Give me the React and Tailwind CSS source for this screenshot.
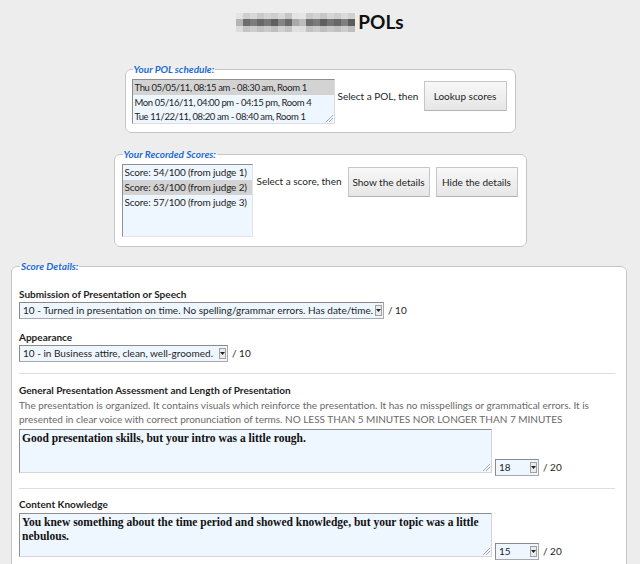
import React from 'react';

// pixelated (blurred-out) name in the title
const mosaicRows = [
  ['bg-[#e4e4e4]', 'bg-[#cfcfcf]', 'bg-[#d8d8d8]', 'bg-[#c9c9c9]', 'bg-[#d4d4d4]', 'bg-[#cdcdcd]', 'bg-[#d9d9d9]', 'bg-[#c6c6c6]', 'bg-[#e3e3e3]', 'bg-[#e6e6e6]', 'bg-[#cbcbcb]', 'bg-[#d3d3d3]', 'bg-[#c7c7c7]', 'bg-[#d6d6d6]', 'bg-[#cecece]', 'bg-[#dadada]', 'bg-[#d0d0d0]'],
  ['bg-[#b4b4b4]', 'bg-[#6d6d6d]', 'bg-[#7d7d7d]', 'bg-[#686868]', 'bg-[#777777]', 'bg-[#606060]', 'bg-[#858585]', 'bg-[#6a6a6a]', 'bg-[#a9a9a9]', 'bg-[#bcbcbc]', 'bg-[#6e6e6e]', 'bg-[#7a7a7a]', 'bg-[#5f5f5f]', 'bg-[#747474]', 'bg-[#676767]', 'bg-[#7f7f7f]', 'bg-[#5c5c5c]'],
  ['bg-[#dcdcdc]', 'bg-[#c4c4c4]', 'bg-[#cdcdcd]', 'bg-[#c1c1c1]', 'bg-[#cacaca]', 'bg-[#bfbfbf]', 'bg-[#d0d0d0]', 'bg-[#c3c3c3]', 'bg-[#e0e0e0]', 'bg-[#dedede]', 'bg-[#c2c2c2]', 'bg-[#cbcbcb]', 'bg-[#bebebe]', 'bg-[#c8c8c8]', 'bg-[#c0c0c0]', 'bg-[#cccccc]', 'bg-[#bdbdbd]'],
];

const rowHeights = ['h-[6px]', 'h-[7px]', 'h-[6px]'];

function Mosaic() {
  return (
    <div className="flex w-[119px] flex-col">
      {mosaicRows.map((row, i) => (
        <div key={i} className={`flex ${rowHeights[i]}`}>
          {row.map((c, j) => (
            <div key={j} className={`w-[7px] ${c}`} />
          ))}
        </div>
      ))}
    </div>
  );
}

function Grip() {
  return (
    <svg width="7" height="7" viewBox="0 0 7 7" className="absolute bottom-[1px] right-[1px]">
      <path d="M7 0L0 7M7 3L3 7" stroke="#aaaaaa" strokeWidth="1" />
    </svg>
  );
}

function Legend({ children }) {
  return (
    <legend className="ml-[1px] px-[1px] text-[10px] leading-[12px] font-bold italic text-[#1c68d4]">
      {children}
    </legend>
  );
}

function Button({ children, className = '' }) {
  return (
    <button
      className={`h-[30px] border border-[#c6c6c6] border-b-[#b2b2b2] bg-linear-to-b from-[#f8f8f8] to-[#e6e6e6] text-[10px] text-[#1e1e1e] ${className}`}
    >
      {children}
    </button>
  );
}

function Dropdown({ children, className = '' }) {
  return (
    <div
      className={`flex h-[17px] items-center justify-between border border-[#a8a8a8] border-t-[#8a8a8a] border-l-[#8a8a8a] bg-[#eef6ff] pl-[3px] pr-[1px] ${className}`}
    >
      <span className="overflow-hidden whitespace-nowrap leading-[15px]">{children}</span>
      <span className="ml-[2px] flex h-[11px] w-[7px] shrink-0 items-center justify-center border border-[#a0a0a0] bg-[#ebebeb]">
        <svg width="5" height="3" viewBox="0 0 5 3">
          <path d="M0 0h5L2.5 3z" fill="#222" />
        </svg>
      </span>
    </div>
  );
}

function Comment({ children, score }) {
  return (
    <div className="flex items-start">
      <div className="relative h-[44px] w-[473px] border border-[#d6d6d6] border-t-[#8e8e8e] border-l-[#8e8e8e] bg-[#eef6ff] px-[2px] pt-[1px] font-['Liberation_Serif',serif] text-[11.5px] leading-[14px] font-bold text-[#111]">
        {children}
        <Grip />
      </div>
      <Dropdown className="mt-[30px] ml-[3px] w-[44px]">{score}</Dropdown>
      <span className="mt-[30px] ml-[4px] leading-[17px]">/ 20</span>
    </div>
  );
}

export default function App() {
  return (
    <div className="h-[564px] overflow-hidden bg-[#ededed] pt-[10px] font-['Lato',sans-serif] text-[10px] text-[#1e1e1e]">
      <h1 className="flex h-[24px] items-center justify-center">
        <Mosaic />
        <span className="ml-[3px] text-[19px] leading-[24px] font-bold text-[#111]">POLs</span>
      </h1>

      <fieldset className="mx-auto mt-[29px] w-[391px] rounded-[6px] border border-[#c6c6c6] bg-white px-[6px] pb-[8px]">
        <Legend>Your POL schedule:</Legend>
        <div className="mt-[4px] flex items-start">
          <div className="relative h-[45px] w-[203px] shrink-0 overflow-hidden border border-[#dcdcdc] border-t-[#8e8e8e] border-l-[#8e8e8e] bg-[#eef6ff] text-[9.5px] tracking-[-0.4px] whitespace-nowrap">
            <div className="h-[15px] bg-[#d3d3d3] px-[2px] leading-[15px]">Thu 05/05/11, 08:15 am - 08:30 am, Room 1</div>
            <div className="h-[15px] px-[2px] leading-[15px]">Mon 05/16/11, 04:00 pm - 04:15 pm, Room 4</div>
            <div className="h-[14px] px-[2px] leading-[14px]">Tue 11/22/11, 08:20 am - 08:40 am, Room 1</div>
            <Grip />
          </div>
          <span className="mt-[10px] ml-[3px] w-[86px] shrink-0 whitespace-nowrap leading-[15px]">Select a POL, then</span>
          <Button className="mt-[2px] w-[83px]">Lookup scores</Button>
        </div>
      </fieldset>

      <fieldset className="mx-auto mt-[15px] w-[413px] rounded-[6px] border border-[#c6c6c6] bg-white px-[7px] pb-[9px]">
        <Legend>Your Recorded Scores:</Legend>
        <div className="mt-[4px] flex items-start">
          <div className="h-[73px] w-[131px] shrink-0 overflow-hidden border border-[#e4e4e4] border-t-[#8e8e8e] border-l-[#8e8e8e] bg-[#eef6ff] tracking-[-0.15px] whitespace-nowrap">
            <div className="h-[15px] px-[2px] leading-[15px]">Score: 54/100 (from judge 1)</div>
            <div className="h-[15px] bg-[#d3d3d3] px-[2px] leading-[15px]">Score: 63/100 (from judge 2)</div>
            <div className="h-[15px] px-[2px] leading-[15px]">Score: 57/100 (from judge 3)</div>
          </div>
          <span className="mt-[10px] ml-[4px] w-[91px] shrink-0 whitespace-nowrap leading-[15px]">Select a score, then</span>
          <Button className="mt-[3px] w-[82px]">Show the details</Button>
          <Button className="mt-[3px] ml-[6px] w-[82px]">Hide the details</Button>
        </div>
      </fieldset>

      <fieldset className="mt-[13px] ml-[11px] w-[616px] rounded-[6px] border border-[#c6c6c6] bg-white px-[7px] pb-[20px]">
        <Legend>Score Details:</Legend>

        <div className="mt-[15px] font-bold leading-[15px]">Submission of Presentation or Speech</div>
        <div className="flex items-center">
          <Dropdown className="w-[365px]">
            10 - Turned in presentation on time. No spelling/grammar errors. Has date/time.
          </Dropdown>
          <span className="ml-[4px]">/ 10</span>
        </div>

        <div className="mt-[11px] font-bold leading-[15px]">Appearance</div>
        <div className="flex items-center">
          <Dropdown className="w-[209px]">10 - in Business attire, clean, well-groomed.</Dropdown>
          <span className="ml-[4px]">/ 10</span>
        </div>

        <hr className="mt-[11px] mr-[4px] border-[#dedede]" />

        <div className="mt-[9px] font-bold leading-[15px]">General Presentation Assessment and Length of Presentation</div>
        <p className="leading-[14px] text-[#6a6a6a]">
          The presentation is organized. It contains visuals which reinforce the presentation. It has no misspellings or
          grammatical errors. It is presented in clear voice with correct pronunciation of terms. NO LESS THAN 5 MINUTES
          NOR LONGER THAN 7 MINUTES
        </p>
        <div className="mt-[3px]">
          <Comment score="18">Good presentation skills, but your intro was a little rough.</Comment>
        </div>

        <hr className="mt-[12px] mr-[4px] border-[#dedede]" />

        <div className="mt-[8px] font-bold leading-[15px]">Content Knowledge</div>
        <div className="mt-[1px]">
          <Comment score="15">
            You knew something about the time period and showed knowledge, but your topic was a little nebulous.
          </Comment>
        </div>
      </fieldset>
    </div>
  );
}
